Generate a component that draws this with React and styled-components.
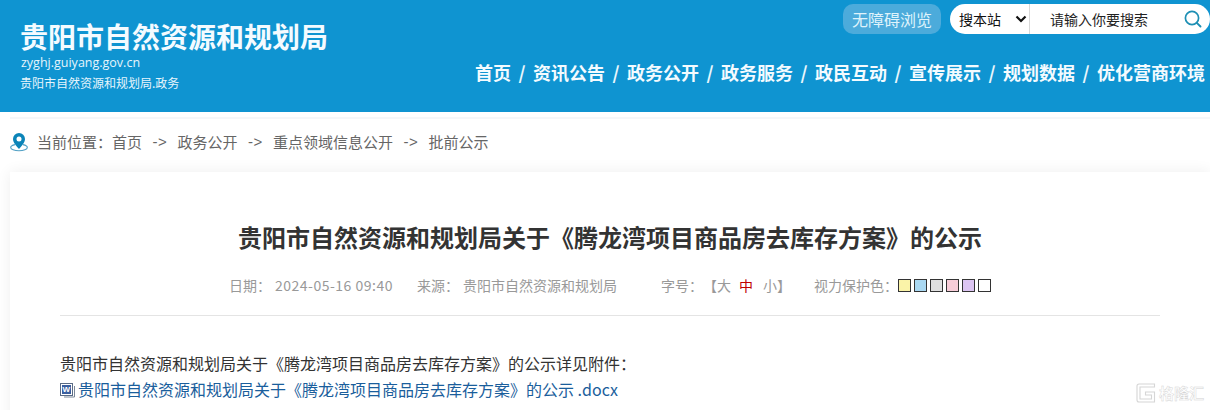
import React from "react";
import styled, { createGlobalStyle } from "styled-components";

const Global = createGlobalStyle`
  html, body { margin: 0; padding: 0; background: #fff; height: 410px; overflow: hidden; }
  * { box-sizing: border-box; }
  body { font-family: "Noto Sans CJK SC", "Noto Sans", sans-serif; }
`;
const Page = styled.div`width: 1210px; height: 410px; overflow: hidden; position: relative; background: #fff;`;
const Header = styled.header`
  height: 112px; background: #0f94d1; color: #fff; display: flex; justify-content: space-between;
`;
const Brand = styled.div`padding: 17px 0 0 20px; display: flex; flex-direction: column;`;
const SiteName = styled.h1`margin: 0; font-size: 28px; line-height: 38px; font-weight: 700; color: #f4fbff;`;
const Domain = styled.div`font-family: "Open Sans", sans-serif; font-size: 12.5px; line-height: 18px; margin: -1px 0 0 1px; color: #e6f5fc;`;
const BrandSub = styled.div`font-size: 12px; line-height: 18px; margin-top: 2px; color: #e6f5fc;`;
const HeaderRight = styled.div`display: flex; flex-direction: column; align-items: flex-end;`;
const Tools = styled.div`display: flex; align-items: center; gap: 9px; margin-top: 4px; height: 30px;`;
const Accessible = styled.div`
  width: 98px; height: 30px; border-radius: 10px; background: #4cabdb; color: #dff3fb;
  font-size: 16px; line-height: 30px; text-align: center;
`;
const Search = styled.div`
  width: 260px; height: 30px; border-radius: 15px; background: #fff; display: flex; align-items: center; color: #222;
`;
const Scope = styled.div`
  width: 80px; height: 30px; border-right: 1px solid #d8d8d8; display: flex; align-items: center;
  padding-left: 9px; gap: 14px; font-size: 14px; color: #111;
`;
const Placeholder = styled.div`flex: 1; padding-left: 20px; font-size: 14px; color: #222;`;
const SearchBtn = styled.div`width: 32px; display: flex; align-items: center; padding-left: 5px;`;
const Nav = styled.nav`display: flex; align-items: center; margin-top: 23px; height: 30px; padding-right: 5px;`;
const NavItem = styled.span`font-size: 18px; font-weight: 700; color: #f4fbff; line-height: 30px;`;
const NavSep = styled.span`
  width: 22px; text-align: center; font-size: 18px; font-weight: 700; color: #eaf7fd; line-height: 30px;
`;
const Crumbs = styled.div`
  display: flex; align-items: center; height: 55px; margin: 5px 0 0 10px; padding-bottom: 8px;
  font-size: 15px; color: #666; border-top: 2px solid #f5f7f9;
`;
const CrumbLabel = styled.span`margin-left: 7px;`;
const CrumbArrow = styled.span`width: 35.5px; text-align: center; font-family: "Liberation Sans", sans-serif; letter-spacing: 0.5px;`;
const Card = styled.main`
  margin-left: 10px; width: 1200px; height: 300px; padding: 0 50px; background: #fff;
  box-shadow: 0 0 14px rgba(0, 0, 0, 0.07);
`;
const Title = styled.h2`
  margin: 0; padding-top: 47px; font-size: 24px; line-height: 36px; font-weight: 700; color: #333; text-align: center;
`;
const Meta = styled.div`
  display: flex; align-items: center; height: 61px; padding: 11px 0 11px 169px; font-size: 14px; color: #999;
  border-bottom: 1px solid #e4e4e4;
`;
const MetaGap = styled.span`display: inline-block; width: ${(p) => p.$w}px;`;
const MetaDate = styled.span`letter-spacing: 0.5px;`;
const SizeOpt = styled.span`color: ${(p) => (p.$active ? "#c00000" : "#999")}; margin: 0 ${(p) => p.$r ?? 0}px 0 ${(p) => p.$l ?? 0}px;`;
const Swatches = styled.div`display: flex; gap: 3px;`;
const Swatch = styled.span`width: 13px; height: 13px; border: 1px solid #333; background: ${(p) => p.$c};`;
const Body = styled.div`padding-top: 33.5px; font-size: 16px; line-height: 26px; color: #333;`;
const Para = styled.div``;
const FileLink = styled.a`display: flex; align-items: center; color: #1a5e9c; text-decoration: none;`;
const DocIcon = styled.svg`width: 18px; height: 18px; flex: none; margin-top: 3px;`;
const Mark = styled.div`
  position: absolute; right: 6px; bottom: 7px; display: flex; align-items: center; gap: 3px;
`;
const MarkText = styled.span`
  font-size: 15px; font-weight: 700; color: #fff; -webkit-text-stroke: 0.4px #d2d2d2; line-height: 20px;
`;

const Chevron = () => (
  <svg width="12" height="8" viewBox="0 0 12 8" fill="none">
    <path d="M1.5 1.5 6 6l4.5-4.5" stroke="#111" strokeWidth="2.2" />
  </svg>
);
const SearchIcon = () => (
  <svg width="20" height="20" viewBox="0 0 20 20" fill="none">
    <circle cx="9" cy="9" r="6.6" stroke="#1d8fb4" strokeWidth="1.7" />
    <path d="M13.8 13.8 17.5 17.5" stroke="#1d8fb4" strokeWidth="1.9" strokeLinecap="round" />
  </svg>
);
const PinIcon = () => (
  <svg width="20" height="20" viewBox="0 0 20 20" fill="none">
    <path d="M5 12.6C2.4 13.2.7 14.2.7 15.4c0 1.9 3.7 3.4 8.3 3.4s8.3-1.5 8.3-3.4c0-1.2-1.7-2.2-4.3-2.8" stroke="#4f9fc4" strokeWidth="1.1" />
    <path d="M9 17C6 13.4 3 10.6 3 7A6 6 0 0 1 15 7C15 10.6 12 13.4 9 17Z" fill="#0b84b8" />
    <circle cx="9" cy="7" r="2.5" fill="#fff" />
  </svg>
);
const WordIcon = () => (
  <DocIcon viewBox="0 0 18 18" fill="none">
    <rect x="0.5" y="2.5" width="12" height="12" fill="#fff" stroke="#5a6b85" />
    <rect x="2" y="4" width="9" height="9" fill="#3b5f9f" />
    <text x="2.6" y="11.4" fontSize="8" fontWeight="700" fill="#fff" fontFamily="Liberation Sans, sans-serif">W</text>
    <path d="M14.5 5v11H4" stroke="#7a8798" />
  </DocIcon>
);
const MarkLogo = () => (
  <svg width="20" height="20" viewBox="0 0 20 20" fill="none">
    <path d="M18.5 1H3a2 2 0 0 0-2 2v14a2 2 0 0 0 2 2h15.5V9H9.5v3h6v4H4V4h14.5Z" stroke="#d6d6d6" strokeWidth="1.1" fill="#fff" />
  </svg>
);

const navItems = ["首页", "资讯公告", "政务公开", "政务服务", "政民互动", "宣传展示", "规划数据", "优化营商环境"];
const crumbs = ["首页", "政务公开", "重点领域信息公开", "批前公示"];
const swatches = ["#faf3a8", "#a9d8f2", "#e0e0e0", "#f7cdd8", "#dcc5f2", "#fff"];
const titleText = "贵阳市自然资源和规划局关于《腾龙湾项目商品房去库存方案》的公示";

export default function App() {
  return (
    <Page>
      <Global />
      <Header>
        <Brand>
          <SiteName>贵阳市自然资源和规划局</SiteName>
          <Domain>zyghj.guiyang.gov.cn</Domain>
          <BrandSub>贵阳市自然资源和规划局.政务</BrandSub>
        </Brand>
        <HeaderRight>
          <Tools>
            <Accessible>无障碍浏览</Accessible>
            <Search>
              <Scope>搜本站<Chevron /></Scope>
              <Placeholder>请输入你要搜索</Placeholder>
              <SearchBtn><SearchIcon /></SearchBtn>
            </Search>
          </Tools>
          <Nav>
            {navItems.map((n, i) => (
              <React.Fragment key={n}>
                {i > 0 && <NavSep>/</NavSep>}
                <NavItem>{n}</NavItem>
              </React.Fragment>
            ))}
          </Nav>
        </HeaderRight>
      </Header>
      <Crumbs>
        <PinIcon />
        <CrumbLabel>当前位置：</CrumbLabel>
        {crumbs.map((c, i) => (
          <React.Fragment key={c}>
            {i > 0 && <CrumbArrow>-&gt;</CrumbArrow>}
            <span>{c}</span>
          </React.Fragment>
        ))}
      </Crumbs>
      <Card>
        <Title>{titleText}</Title>
        <Meta>
          <span>日期：</span>
          <MetaGap $w={4} />
          <MetaDate>2024-05-16 09:40</MetaDate>
          <MetaGap $w={24} />
          <span>来源：</span>
          <MetaGap $w={4} />
          <span>贵阳市自然资源和规划局</span>
          <MetaGap $w={44} />
          <span>字号：</span>
          <span>【大</span>
          <SizeOpt $active $l={8} $r={10}>中</SizeOpt>
          <span>小】</span>
          <MetaGap $w={23} />
          <span>视力保护色：</span>
          <Swatches>
            {swatches.map((c) => <Swatch key={c} $c={c} />)}
          </Swatches>
        </Meta>
        <Body>
          <Para>{titleText}详见附件：</Para>
          <FileLink href="#"><WordIcon />{titleText} .docx</FileLink>
        </Body>
      </Card>
      <Mark>
        <MarkLogo />
        <MarkText>格隆汇</MarkText>
      </Mark>
    </Page>
  );
}
